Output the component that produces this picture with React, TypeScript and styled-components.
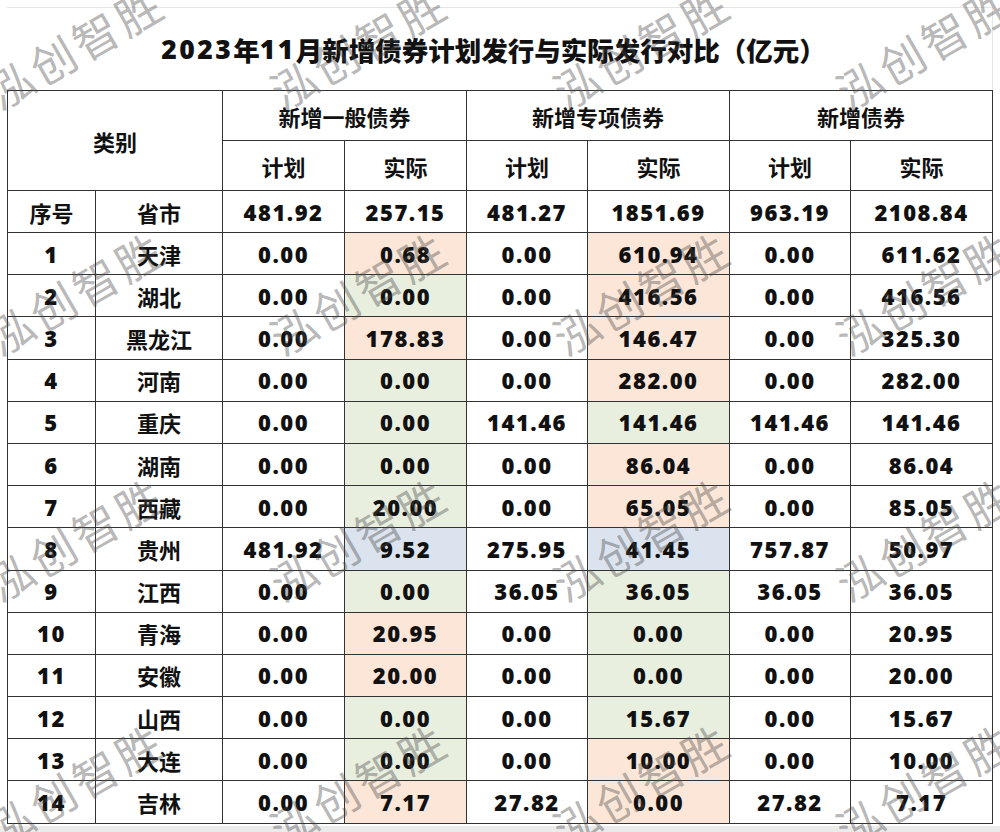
import React from "react";
import styled, {createGlobalStyle} from "styled-components";

const GlobalStyle = createGlobalStyle`
  html, body {
    margin: 0;
    padding: 0;
    background: #fff;
  }
  body {
    font-family: "Open Sans", "Noto Sans CJK SC", sans-serif;
    color: #111;
  }
`;

type Tone = "o" | "g" | "b" | undefined;

const toneColor = (t: Tone) => {
  if (t === "o") return "#fce6d8";
  if (t === "g") return "#e9efdf";
  if (t === "b") return "#dbe4ee";
  return "transparent";
};

const Page = styled.div`
  position: relative;
  width: 1000px;
  height: 832px;
  background: #fff;
  padding-top: 7px;
  box-sizing: border-box;
  overflow: hidden;
`;

const Card = styled.div`
  width: 986px;
  margin-left: 7px;
  border-top: 1px solid #e6e6e6;
  border-right: 1px solid #e6e6e6;
  box-sizing: border-box;
`;

const BottomStrip = styled.div`
  height: 10px;
  margin-top: 2px;
  background: #ebebeb;
`;

const Title = styled.h1`
  margin: 0;
  height: 82px;
  display: flex;
  align-items: center;
  justify-content: center;
  font-family: "Open Sans", "Noto Sans CJK SC", sans-serif;
  font-size: 26.5px;
  font-weight: 800;
  padding-right: 12px;
`;

const Digits = styled.span`
  letter-spacing: 2.5px;
`;

const Sheet = styled.div`
  display: grid;
  grid-template-columns: 88px 127px 122px 122px 121px 142px 121px 142px;
  grid-template-rows: 50px 50px 42px repeat(14, 42.2px);
  width: 986px;
  border-left: 1px solid #333;
  border-top: 1px solid #333;
  box-sizing: border-box;
`;

const Cell = styled.div<{ $tone?: Tone; $num?: boolean; $cols?: number; $rows?: number }>`
  display: flex;
  align-items: center;
  justify-content: center;
  box-sizing: border-box;
  border-right: 1px solid #333;
  border-bottom: 1px solid #333;
  grid-column: span ${p => p.$cols ?? 1};
  grid-row: span ${p => p.$rows ?? 1};
  background: ${p => toneColor(p.$tone)};
  font-family: ${p => (p.$num ? `"Open Sans", "Noto Sans CJK SC", sans-serif` : `"Noto Sans CJK SC", sans-serif`)};
  font-size: 22px;
  font-weight: ${p => (p.$num ? 800 : 700)};
  letter-spacing: ${p => (p.$num ? "1.5px" : "0")};
  line-height: 1;
  white-space: nowrap;
`;

const Watermarks = styled.div`
  position: absolute;
  left: -66px;
  top: -78px;
  display: grid;
  grid-template-columns: repeat(4, 283px);
  grid-template-rows: repeat(4, 246px);
  place-items: center;
  pointer-events: none;
`;

const Mark = styled.span`
  font-family: "Noto Sans CJK SC", sans-serif;
  font-size: 45px;
  font-weight: 400;
  letter-spacing: 4px;
  color: rgba(70, 70, 70, 0.4);
  transform: rotate(-30deg);
  white-space: nowrap;
`;

type Rec = [string, string, string, string, string, string, string, string];

const rows: Rec[] = [
  ["1", "天津", "0.00", "0.68", "0.00", "610.94", "0.00", "611.62"],
  ["2", "湖北", "0.00", "0.00", "0.00", "416.56", "0.00", "416.56"],
  ["3", "黑龙江", "0.00", "178.83", "0.00", "146.47", "0.00", "325.30"],
  ["4", "河南", "0.00", "0.00", "0.00", "282.00", "0.00", "282.00"],
  ["5", "重庆", "0.00", "0.00", "141.46", "141.46", "141.46", "141.46"],
  ["6", "湖南", "0.00", "0.00", "0.00", "86.04", "0.00", "86.04"],
  ["7", "西藏", "0.00", "20.00", "0.00", "65.05", "0.00", "85.05"],
  ["8", "贵州", "481.92", "9.52", "275.95", "41.45", "757.87", "50.97"],
  ["9", "江西", "0.00", "0.00", "36.05", "36.05", "36.05", "36.05"],
  ["10", "青海", "0.00", "20.95", "0.00", "0.00", "0.00", "20.95"],
  ["11", "安徽", "0.00", "20.00", "0.00", "0.00", "0.00", "20.00"],
  ["12", "山西", "0.00", "0.00", "0.00", "15.67", "0.00", "15.67"],
  ["13", "大连", "0.00", "0.00", "0.00", "10.00", "0.00", "10.00"],
  ["14", "吉林", "0.00", "7.17", "27.82", "0.00", "27.82", "7.17"],
];

// colour marks for the two "实际" columns: general / special
const generalTone = "ogoggggbgooggo".split("") as Tone[];
const specialTone = "oooogoobggggoob".split("") as Tone[];

const totals = ["481.92", "257.15", "481.27", "1851.69", "963.19", "2108.84"];

function App() {
  return (
    <Page>
      <GlobalStyle/>
      <Card>
        <Title>
          <Digits>2023</Digits>年<Digits>11</Digits>月新增债券计划发行与实际发行对比（亿元）
        </Title>
        <Sheet>
          <Cell $cols={2} $rows={2}>类别</Cell>
          <Cell $cols={2}>新增一般债券</Cell>
          <Cell $cols={2}>新增专项债券</Cell>
          <Cell $cols={2}>新增债券</Cell>
          {[0, 1, 2].map(i => (
            <React.Fragment key={i}>
              <Cell>计划</Cell>
              <Cell>实际</Cell>
            </React.Fragment>
          ))}
          <Cell>序号</Cell>
          <Cell>省市</Cell>
          {totals.map((v, i) => <Cell key={i} $num>{v}</Cell>)}
          {rows.map((r, idx) => (
            <React.Fragment key={r[0]}>
              <Cell $num>{r[0]}</Cell>
              <Cell>{r[1]}</Cell>
              <Cell $num>{r[2]}</Cell>
              <Cell $num $tone={generalTone[idx]}>{r[3]}</Cell>
              <Cell $num>{r[4]}</Cell>
              <Cell $num $tone={specialTone[idx]}>{r[5]}</Cell>
              <Cell $num>{r[6]}</Cell>
              <Cell $num>{r[7]}</Cell>
            </React.Fragment>
          ))}
        </Sheet>
      </Card>
      <BottomStrip/>
      <Watermarks>
        {Array.from({length: 16}).map((_, i) => <Mark key={i}>泓创智胜</Mark>)}
      </Watermarks>
    </Page>
  );
}

export default App;
